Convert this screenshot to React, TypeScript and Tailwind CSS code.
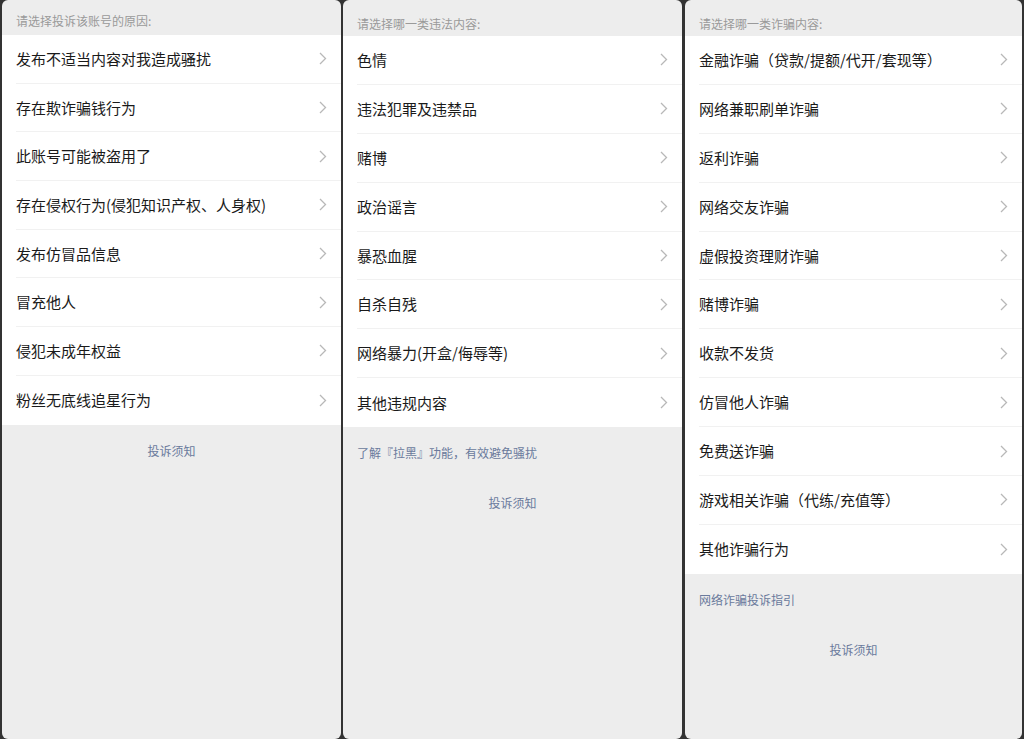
import React from "react";

const font = { fontFamily: '"Noto Sans CJK SC", "Noto Sans", sans-serif' };

function Chevron() {
  return (
    <svg width="8" height="13" viewBox="0 0 8 13" className="shrink-0">
      <path d="M1 1 L6.5 6.5 L1 12" fill="none" stroke="#b8b8b8" strokeWidth="1.3" />
    </svg>
  );
}

function Panel({
  title,
  items,
  link,
  headerClass,
  firstGap,
  widthClass,
  rowClass,
}: {
  title: string;
  items: string[];
  link?: string;
  headerClass: string;
  firstGap: string;
  widthClass: string;
  rowClass: string;
}) {
  return (
    <div className={`flex h-[739px] shrink-0 flex-col overflow-hidden rounded-[6px] bg-[#ededed] ${widthClass}`}>
      <div className={`flex shrink-0 items-end pl-[14px] text-[12px] leading-[14px] text-[#9a9a9a] ${headerClass}`}>
        {title}
      </div>
      <div className="bg-white">
        {items.map((it, i) => (
          <div key={i} className="pl-[14px]">
            <div
              className={`flex items-center justify-between pr-[14px] ${rowClass} ${
                i < items.length - 1 ? "border-b border-[#f1f1f1]" : ""
              }`}
            >
              <span className="text-[15px] leading-[20px] text-[#1a1a1a]">{it}</span>
              <Chevron />
            </div>
          </div>
        ))}
      </div>
      {link && (
        <div className="pl-[14px] pt-[18px] text-[12px] leading-[16px] text-[#6a7a9c]">{link}</div>
      )}
      <div className={`text-center text-[12px] leading-[16px] text-[#6a7a9c] ${firstGap}`}>投诉须知</div>
    </div>
  );
}

export default function App() {
  return (
    <div style={font} className="flex h-[739px] w-[1024px] bg-[#333333] pl-[2px] pr-[2px]">
      <Panel
        title="请选择投诉该账号的原因:"
        headerClass="h-[35px] pb-[7px]"
        firstGap="pt-[18px]"
        widthClass="w-[339px]"
        rowClass="h-[48.7px]"
        items={[
          "发布不适当内容对我造成骚扰",
          "存在欺诈骗钱行为",
          "此账号可能被盗用了",
          "存在侵权行为(侵犯知识产权、人身权)",
          "发布仿冒品信息",
          "冒充他人",
          "侵犯未成年权益",
          "粉丝无底线追星行为",
        ]}
      />
      <div className="w-[2px] shrink-0" />
      <Panel
        title="请选择哪一类违法内容:"
        headerClass="h-[36px] pb-[5px]"
        link="了解『拉黑』功能，有效避免骚扰"
        firstGap="pt-[34px]"
        widthClass="w-[339px]"
        rowClass="h-[48.9px]"
        items={[
          "色情",
          "违法犯罪及违禁品",
          "赌博",
          "政治谣言",
          "暴恐血腥",
          "自杀自残",
          "网络暴力(开盒/侮辱等)",
          "其他违规内容",
        ]}
      />
      <div className="w-[3px] shrink-0" />
      <Panel
        title="请选择哪一类诈骗内容:"
        headerClass="h-[36px] pb-[5px]"
        link="网络诈骗投诉指引"
        firstGap="pt-[34px]"
        widthClass="w-[337px]"
        rowClass="h-[48.9px]"
        items={[
          "金融诈骗（贷款/提额/代开/套现等）",
          "网络兼职刷单诈骗",
          "返利诈骗",
          "网络交友诈骗",
          "虚假投资理财诈骗",
          "赌博诈骗",
          "收款不发货",
          "仿冒他人诈骗",
          "免费送诈骗",
          "游戏相关诈骗（代练/充值等）",
          "其他诈骗行为",
        ]}
      />
    </div>
  );
}
